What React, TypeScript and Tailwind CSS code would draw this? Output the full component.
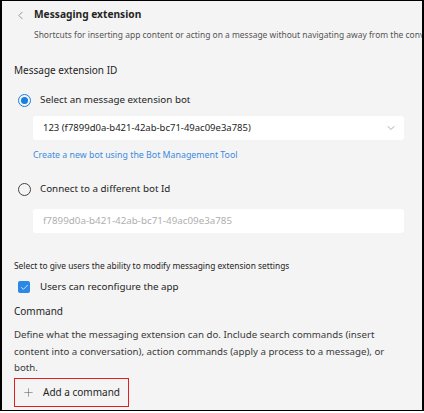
import { ChevronLeft, ChevronDown, Plus, Check } from "lucide-react";

const font = { fontFamily: '"Noto Sans", "Open Sans", sans-serif' };

const Radio = ({ checked }: { checked: boolean }) =>
  checked ? (
    <span className="flex h-[13px] w-[13px] shrink-0 items-center justify-center rounded-full border-[1.5px] border-[#1a7fe0]">
      <span className="h-[7px] w-[7px] rounded-full bg-[#1a7fe0]" />
    </span>
  ) : (
    <span className="h-[13px] w-[13px] shrink-0 rounded-full border border-[#444]" />
  );

export default function App() {
  return (
    <div className="h-[413px] w-[424px] bg-white">
      <div
        className="h-[411px] w-[424px] overflow-hidden border-t border-b border-l-2 border-r-2 border-black bg-[#f4f4f4] text-[#242424]"
        style={font}
      >
        <div className="flex h-[28px] items-center pl-[12px]">
          <ChevronLeft size={13} strokeWidth={1.2} className="text-[#616161]" />
          <h1 className="ml-[7px] whitespace-nowrap text-[10.2px] font-bold">Messaging extension</h1>
        </div>
        <p className="ml-[32px] whitespace-nowrap text-[8.45px] leading-[12px] text-[#555]">
          Shortcuts for inserting app content or acting on a message without navigating away from the conversation.
        </p>

        <div className="pl-[12px] pr-[18px]">
          <p className="mt-[21px] text-[10px] leading-[16px]">Message extension ID</p>

          <label className="mt-[14px] flex h-[16px] items-center gap-[9px] pl-[4px]">
            <Radio checked />
            <span className="text-[9.8px]">Select an message extension bot</span>
          </label>

          <div className="mt-[8px] ml-[19px] flex h-[24px] items-center justify-between rounded-[3px] bg-white pl-[10px] pr-[7px]">
            <span className="text-[9.5px]">123 (f7899d0a-b421-42ab-bc71-49ac09e3a785)</span>
            <ChevronDown size={12} strokeWidth={1.1} className="text-[#666]" />
          </div>

          <a className="mt-[8px] ml-[19px] block text-[8.8px] leading-[14px] text-[#3c8ade]">
            Create a new bot using the Bot Management Tool
          </a>

          <label className="mt-[19px] flex h-[16px] items-center gap-[9px] pl-[4px]">
            <Radio checked={false} />
            <span className="text-[9.8px]">Connect to a different bot Id</span>
          </label>

          <div className="mt-[12px] ml-[19px] flex h-[24px] items-center rounded-[3px] bg-white pl-[10px]">
            <span className="text-[9.8px] text-[#b0b0b0]">f7899d0a-b421-42ab-bc71-49ac09e3a785</span>
          </div>

          <p className="mt-[27px] text-[8.4px] leading-[12px]">
            Select to give users the ability to modify messaging extension settings
          </p>

          <label className="mt-[7px] flex h-[16px] items-center gap-[10px] pl-[4px]">
            <span className="flex h-[12px] w-[12px] items-center justify-center rounded-[2px] bg-[#2b88e6]">
              <Check size={9} strokeWidth={2} className="text-white" />
            </span>
            <span className="text-[9.8px]">Users can reconfigure the app</span>
          </label>

          <p className="mt-[8px] text-[10px] leading-[16px]">Command</p>

          <p className="mt-[8px] text-[9.7px] leading-[16.5px] text-[#3a3a3a]">
            Define what the messaging extension can do. Include search commands (insert content into a conversation), action
            commands (apply a process to a message), or both.
          </p>

          <button className="mt-[1px] flex h-[29px] w-[115px] items-center gap-[8px] border border-[#e02020] pl-[7px]">
            <Plus size={13} strokeWidth={1.1} className="text-[#666]" />
            <span className="text-[10px]">Add a command</span>
          </button>
        </div>
      </div>
    </div>
  );
}
